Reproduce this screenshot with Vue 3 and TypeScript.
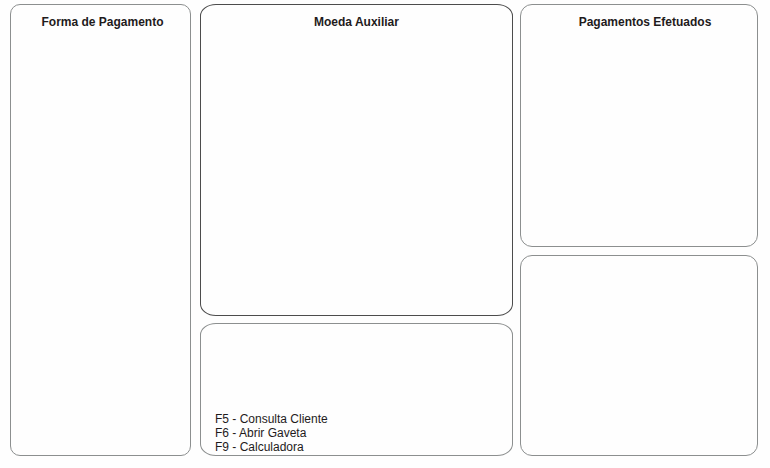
<script setup lang="ts">
interface Shortcut {
  key: string
  label: string
}

const shortcuts: Shortcut[] = [
  { key: 'F5', label: 'Consulta Cliente' },
  { key: 'F6', label: 'Abrir Gaveta' },
  { key: 'F9', label: 'Calculadora' },
]
</script>

<template>
  <main class="payment">
    <section class="panel methods">
      <h2 class="title">Forma de Pagamento</h2>
    </section>

    <div class="column center">
      <section class="panel wide currency">
        <h2 class="title">Moeda Auxiliar</h2>
      </section>
      <section class="panel wide help">
        <ul class="shortcuts">
          <li v-for="item in shortcuts" :key="item.key">{{ item.key }} - {{ item.label }}</li>
        </ul>
      </section>
    </div>

    <div class="column side">
      <section class="panel payments">
        <h2 class="title">Pagamentos Efetuados</h2>
      </section>
      <section class="panel"></section>
    </div>
  </main>
</template>

<style>
body {
  background: #fefefe;
}
</style>

<style scoped>
.payment {
  box-sizing: border-box;
  min-height: 100vh;
  padding: 4px 12px 12px 10px;
  display: grid;
  grid-template-columns: 183fr 313fr 238fr;
  gap: 7px;
  font-family: "Liberation Sans", Arial, sans-serif;
  font-size: 12px;
  line-height: 14px;
  color: #1f1b1c;
}

.column {
  display: grid;
}

.center {
  grid-template-rows: 312fr 133fr;
  gap: 7px;
}

.side {
  grid-template-rows: 243fr 201fr;
  gap: 8px;
}

.panel {
  box-sizing: border-box;
  padding: 10px 14px 1px;
  border: 1px solid #8c8f8f;
  border-radius: 12px;
}

.methods {
  margin-right: 2px;
  padding-left: 18px;
  border-radius: 10px;
}

.wide {
  border-radius: 16px / 12px;
}

.currency {
  border-color: #4c4c4c;
}

.payments {
  padding-left: 26px;
}

.help {
  display: flex;
  align-items: flex-end;
}

.title {
  margin: 0;
  font-size: 12px;
  font-weight: bold;
  text-align: center;
}

.shortcuts {
  margin: 0;
  padding: 0;
  list-style: none;
}
</style>
